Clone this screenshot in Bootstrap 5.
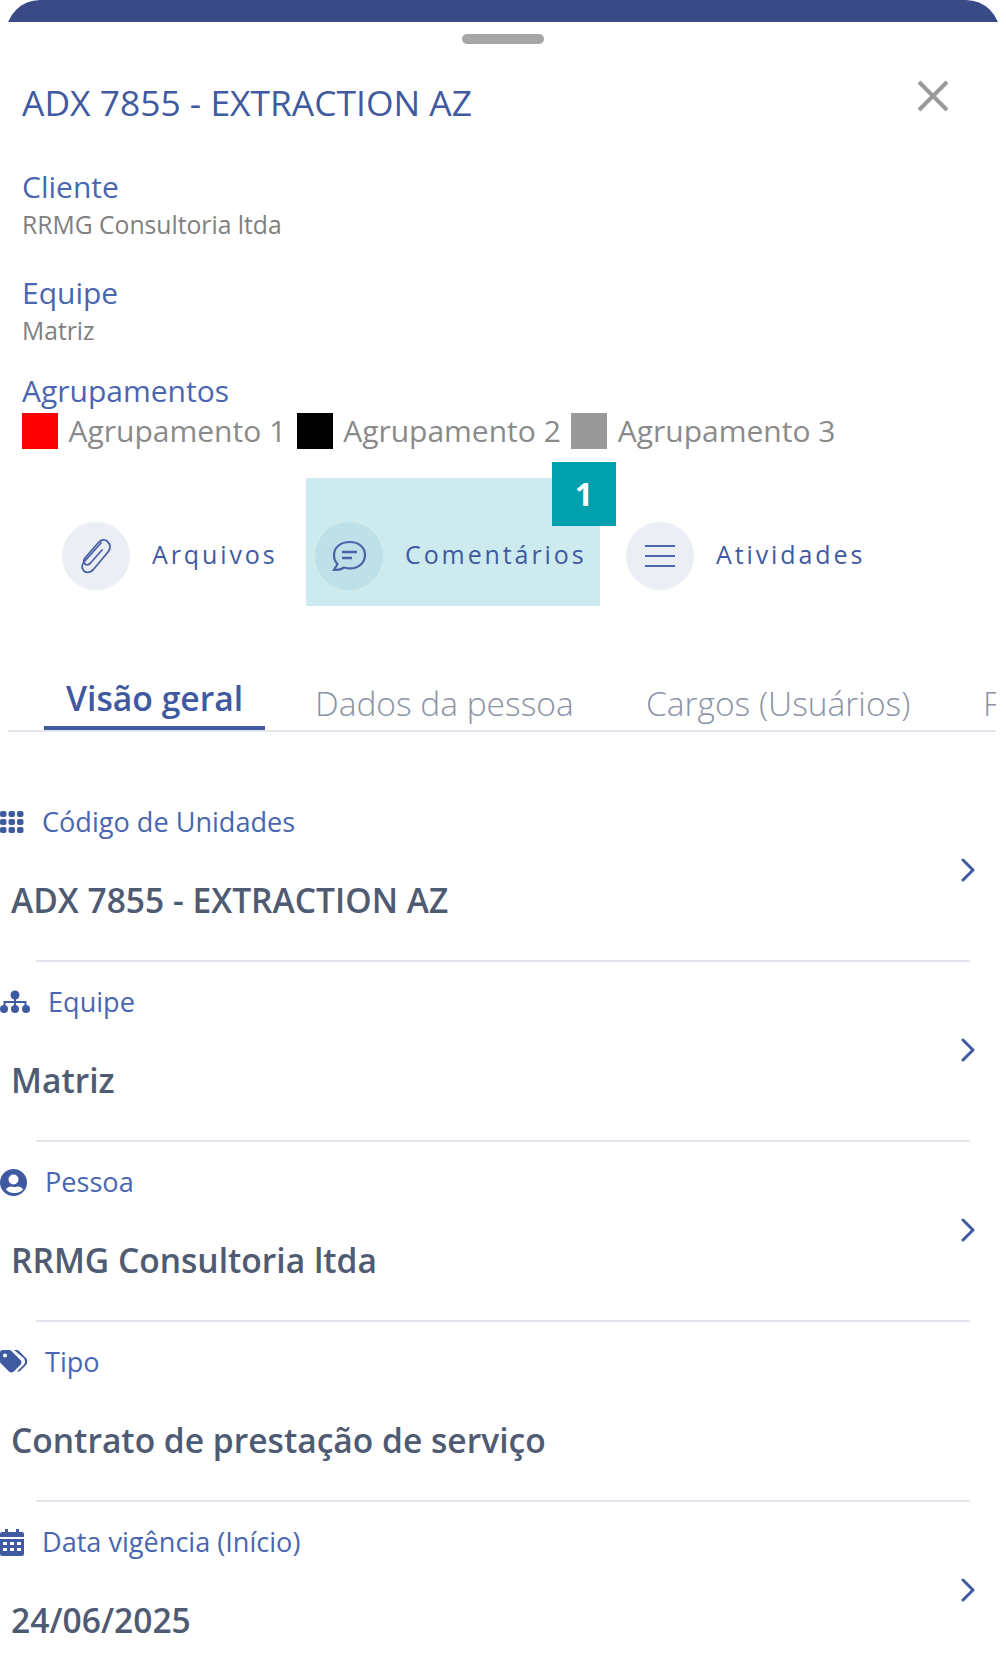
<!DOCTYPE html>
<html lang="pt-BR">
<head>
<meta charset="utf-8">
<title>ADX 7855</title>
<link href="https://cdn.jsdelivr.net/npm/bootstrap@5.3.0/dist/css/bootstrap.min.css" rel="stylesheet">
<style>
html,body{height:1680px;overflow:hidden;background:#fff}
body{font-family:"Open Sans","Liberation Sans",sans-serif;color:#4a5670}
.topbar{height:22px;margin:0 6px;overflow:hidden}
.topbar::before{content:"";display:block;height:80px;background:#3a4a87;border-radius:34px}
.handle{width:82px;height:10px;background:#a6a6a6;border-radius:5px;margin:12px auto 0}
.head{padding:0 0 0 22px;margin-top:36px;height:57px}
.title{font-size:35.400px;line-height:44px;font-weight:500;color:#3f5aa0;margin:0}
.closex{width:32px;height:32px;margin:0 57px 0 0;flex:none}
.info{padding-left:22px}
.lbl{font-size:30px;line-height:40px;color:#4a66b0;margin:0}
.sub{font-size:24.700px;line-height:36px;color:#808080;margin:0}
.b1{margin-top:30px}.b2{margin-top:30px}.b3{margin-top:22px}
.groups{padding-left:22px;margin-top:2px;height:36px;font-size:30px;line-height:36px;color:#8a8a8a;gap:10.500px}
.sw{width:36px;height:36px;flex:none}
.sw-r{background:#f00}.sw-k{background:#000}.sw-g{background:#999}
.gname{white-space:nowrap}
.actions{margin-top:29px;height:128px;padding-left:62px}
.act{display:flex;align-items:flex-start;height:128px;padding-top:44px}
.circ{width:68px;height:68px;border-radius:50%;background:#eceef6;flex:none}
.act-t{font-size:25px;line-height:64px;letter-spacing:2.900px;color:#3f5aa0;margin-left:22px;white-space:nowrap}
.a1{width:244px}
.a2{width:294px;padding-left:9px;background:#cdebee;margin-right:26px}
.a2 .circ{background:#bde0e9}
.notif{position:absolute;left:246px;top:-16px;width:64px;height:64px;background:#00a0ae;color:#fff;font-size:32px;font-weight:700}
.tabsbar{margin:60px 10px 0 8px;height:66px;border-bottom:2px solid #e3e6ec;overflow:hidden;position:relative}
.tabi{position:absolute;white-space:nowrap;font-size:33.500px;line-height:48px;color:#8b93a6;font-weight:300}
.tabi.on{left:36px;top:0;width:221px;height:66px;padding-left:22px;border-bottom:6px solid #3f5aa0;color:#3f5aa0;font-weight:600;font-size:33.700px;line-height:64px}
.t2{left:307px;top:13px}.t3{left:638px;top:13px}.t4{left:975px;top:13px}
.rows{margin-top:50px}
.rw{height:180px;position:relative;padding-top:22px}
.rw-l{font-size:27.100px;line-height:36px;color:#4a66b0;gap:18px}
.rw-l svg{flex:none}
.rw-v{font-size:33.600px;line-height:46px;font-weight:600;color:#4f5b73;margin:37px 0 0 11px;white-space:nowrap}
.rule{position:absolute;left:36px;right:36px;bottom:0;height:2px;background:#e3e6ef}
.chev{position:absolute;right:31px;top:76px}
.ico{fill:#3f5aa0}
</style>
</head>
<body>
<div class="topbar"></div>
<div class="handle"></div>

<div class="head d-flex justify-content-between align-items-start">
  <h1 class="title">ADX 7855 - EXTRACTION AZ</h1>
  <svg class="closex" viewBox="0 0 32 32" fill="none" stroke="#9a9a9a" stroke-width="4"><path d="M2 2 30 30M30 2 2 30"/></svg>
</div>

<div class="info">
  <div class="b1"><p class="lbl">Cliente</p><p class="sub">RRMG Consultoria ltda</p></div>
  <div class="b2"><p class="lbl">Equipe</p><p class="sub">Matriz</p></div>
  <div class="b3"><p class="lbl">Agrupamentos</p></div>
</div>
<div class="groups d-flex align-items-center">
  <span class="sw sw-r"></span><span class="gname">Agrupamento 1</span>
  <span class="sw sw-k"></span><span class="gname">Agrupamento 2</span>
  <span class="sw sw-g"></span><span class="gname">Agrupamento 3</span>
</div>

<div class="actions d-flex">
  <div class="act a1">
    <span class="circ d-flex align-items-center justify-content-center">
      <svg class="me-1" width="34" height="36" viewBox="0 0 34 36" fill="none" stroke="#4a62a8" stroke-width="1.800" stroke-linecap="round"><path d="M24 5 7 24c-3 4-2 7 0 9s6 2 9-1l15-18c3-4 2-8-.5-10.500S24 1.500 21 5L8 20c-2 2.500-1.500 4.500 0 6s3.500 1 5.500-1L25 12"/></svg>
    </span>
    <span class="act-t">Arquivos</span>
  </div>
  <div class="act a2 position-relative">
    <span class="circ d-flex align-items-center justify-content-center">
      <svg width="36" height="32" viewBox="0 0 36 32" fill="none" stroke="#4a62a8" stroke-width="2.200"><path d="M19 2C10 2 3 7 3 15c0 4 1.500 7 3.500 9L3 30c5 0 8-1 10-2.500 2 .5 4 .9 6 .9 9 0 15-6 15-13.400S28 2 19 2Z"/><path d="M11 12h15M11 18h10" stroke-width="2.600"/></svg>
    </span>
    <span class="act-t">Comentários</span>
    <span class="notif d-flex align-items-center justify-content-center">1</span>
  </div>
  <div class="act">
    <span class="circ d-flex align-items-center justify-content-center">
      <svg width="30" height="24" viewBox="0 0 30 24" fill="none" stroke="#4f69af" stroke-width="2"><path d="M0 2h30M0 12h30M0 22h30"/></svg>
    </span>
    <span class="act-t">Atividades</span>
  </div>
</div>

<div class="tabsbar">
  <span class="tabi on">Visão geral</span>
  <span class="tabi t2">Dados da pessoa</span>
  <span class="tabi t3">Cargos (Usuários)</span>
  <span class="tabi t4">Função</span>
</div>

<div class="rows">
  <div class="rw">
    <div class="rw-l d-flex align-items-center">
      <svg class="ico" width="24" height="24" viewBox="0 0 24 24"><rect x="0" y="1" width="6.500" height="6" rx="2"/><rect x="8.500" y="1" width="6.500" height="6" rx="2"/><rect x="17" y="1" width="6.500" height="6" rx="2"/><rect x="0" y="9" width="6.500" height="6" rx="2"/><rect x="8.500" y="9" width="6.500" height="6" rx="2"/><rect x="17" y="9" width="6.500" height="6" rx="2"/><rect x="0" y="17" width="6.500" height="6" rx="2"/><rect x="8.500" y="17" width="6.500" height="6" rx="2"/><rect x="17" y="17" width="6.500" height="6" rx="2"/></svg>
      <span>Código de Unidades</span>
    </div>
    <p class="rw-v">ADX 7855 - EXTRACTION AZ</p>
    <svg class="chev" width="14" height="24" viewBox="0 0 14 24" fill="none" stroke="#3f5aa0" stroke-width="3" stroke-linecap="round" stroke-linejoin="round"><path d="m2 2 10 10L2 22"/></svg>
    <div class="rule"></div>
  </div>
  <div class="rw">
    <div class="rw-l d-flex align-items-center">
      <svg class="ico" width="30" height="24" viewBox="0 0 30 24"><circle cx="15" cy="5" r="4.500"/><circle cx="4" cy="19" r="4"/><circle cx="15" cy="19" r="4"/><circle cx="26" cy="19" r="4"/><path d="M14 8h2v3h10.500v6h-2v-4H16v4h-2v-4H5.500v4h-2v-6H14z"/></svg>
      <span>Equipe</span>
    </div>
    <p class="rw-v">Matriz</p>
    <svg class="chev" width="14" height="24" viewBox="0 0 14 24" fill="none" stroke="#3f5aa0" stroke-width="3" stroke-linecap="round" stroke-linejoin="round"><path d="m2 2 10 10L2 22"/></svg>
    <div class="rule"></div>
  </div>
  <div class="rw">
    <div class="rw-l d-flex align-items-center">
      <svg class="ico" width="27" height="27" viewBox="0 0 27 27"><path fill-rule="evenodd" d="M13.500 0a13.500 13.500 0 1 0 0 27 13.500 13.500 0 0 0 0-27Zm0 5.500a5 5 0 1 1 0 10 5 5 0 0 1 0-10Zm0 18.500c-3 0-5.700-1.300-7.600-3.400 1-1.900 3-3.100 5.100-3.100.4 0 .8.100 1.100.2.800.2 1.500.4 2.400.4s1.600-.2 2.400-.4c.3-.1.700-.2 1.100-.2 2.100 0 4.100 1.200 5.100 3.100-1.900 2.100-4.600 3.400-7.600 3.400Z"/></svg>
      <span>Pessoa</span>
    </div>
    <p class="rw-v">RRMG Consultoria ltda</p>
    <svg class="chev" width="14" height="24" viewBox="0 0 14 24" fill="none" stroke="#3f5aa0" stroke-width="3" stroke-linecap="round" stroke-linejoin="round"><path d="m2 2 10 10L2 22"/></svg>
    <div class="rule"></div>
  </div>
  <div class="rw">
    <div class="rw-l d-flex align-items-center">
      <svg class="ico" width="27" height="24" viewBox="0 0 27 24"><path fill-rule="evenodd" d="M0 2.500A2.500 2.500 0 0 1 2.500 0H9c1 0 1.800.4 2.500 1l9 9c1.300 1.300 1.300 3.500 0 4.800l-6.700 6.700c-1.300 1.300-3.500 1.300-4.800 0l-9-9C.4 11.800 0 11 0 10ZM5 3.500a2 2 0 1 0 0 4 2 2 0 0 0 0-4Z"/><path d="M14 0h2.500c1 0 1.800.4 2.500 1l7 7c2 2 2 5 0 7l-6 6c-.8.800-2 .8-2.700.2l6.200-6.200c2-2 2-5 0-7z"/></svg>
      <span>Tipo</span>
    </div>
    <p class="rw-v">Contrato de prestação de serviço</p>
    <div class="rule"></div>
  </div>
  <div class="rw">
    <div class="rw-l d-flex align-items-center">
      <svg class="ico" width="24" height="27" viewBox="0 0 24 27"><path fill-rule="evenodd" d="M5 0h3v3h8V0h3v3h3a2 2 0 0 1 2 2v3H0V5a2 2 0 0 1 2-2h3ZM0 10h24v15a2 2 0 0 1-2 2H2a2 2 0 0 1-2-2Zm3 3v3h4v-3Zm7 0v3h4v-3Zm7 0v3h4v-3ZM3 19v3h4v-3Zm7 0v3h4v-3Zm7 0v3h4v-3Z"/></svg>
      <span>Data vigência (Início)</span>
    </div>
    <p class="rw-v">24/06/2025</p>
    <svg class="chev" width="14" height="24" viewBox="0 0 14 24" fill="none" stroke="#3f5aa0" stroke-width="3" stroke-linecap="round" stroke-linejoin="round"><path d="m2 2 10 10L2 22"/></svg>
  </div>
</div>
<script src="https://cdn.jsdelivr.net/npm/bootstrap@5.3.0/dist/js/bootstrap.bundle.min.js"></script>
</body>
</html>
